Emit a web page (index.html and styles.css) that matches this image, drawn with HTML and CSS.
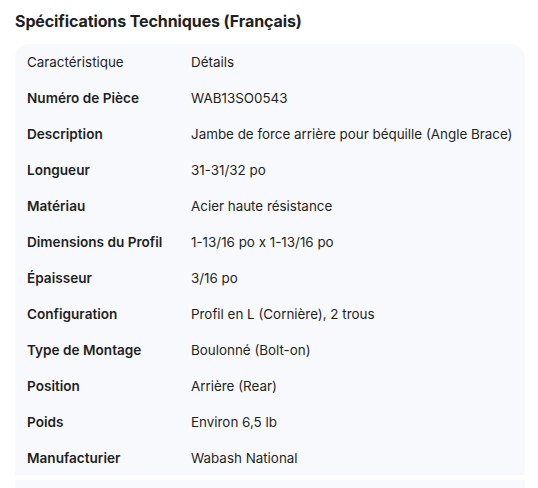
FILE: index.html
```html
<!DOCTYPE html>
<html lang="fr">
<head>
<meta charset="utf-8">
<link rel="stylesheet" href="styles.css">
</head>
<body>
<h2 class="title">Spécifications Techniques (Français)</h2>
<div class="card">
  <table class="specs">
    <thead>
      <tr><th>Caractéristique</th><th>Détails</th></tr>
    </thead>
    <tbody>
      <tr><td class="k">Numéro de Pièce</td><td>WAB13SO0543</td></tr>
      <tr><td class="k">Description</td><td>Jambe de force arrière pour béquille (Angle Brace)</td></tr>
      <tr><td class="k">Longueur</td><td>31-31/32 po</td></tr>
      <tr><td class="k">Matériau</td><td>Acier haute résistance</td></tr>
      <tr><td class="k">Dimensions du Profil</td><td>1-13/16 po x 1-13/16 po</td></tr>
      <tr><td class="k">Épaisseur</td><td>3/16 po</td></tr>
      <tr><td class="k">Configuration</td><td>Profil en L (Cornière), 2 trous</td></tr>
      <tr><td class="k">Type de Montage</td><td>Boulonné (Bolt-on)</td></tr>
      <tr><td class="k">Position</td><td>Arrière (Rear)</td></tr>
      <tr><td class="k">Poids</td><td>Environ 6,5 lb</td></tr>
      <tr><td class="k">Manufacturier</td><td>Wabash National</td></tr>
    </tbody>
  </table>
</div>
<div class="card2"></div>
</body>
</html>
```
FILE: styles.css
```css
html, body { margin: 0; padding: 0; background: #fff; }
body {
  font-family: Inter, Roboto, "Noto Sans", sans-serif;
  color: #1f1f1f;
  padding: 11px 13px 0 15px;
  overflow: hidden;
  height: 488px;
  box-sizing: border-box;
}
.title {
  font-size: 16px;
  font-weight: 700;
  margin: 0 0 13px 0;
  line-height: 20px;
  letter-spacing: -0.1px;
}
.card {
  background: #f8f9fc;
  border-radius: 14px 14px 0 0;
  height: 431px;
}
.specs {
  border-collapse: collapse;
  font-size: 13.4px;
}
.specs th, .specs td {
  text-align: left;
  padding: 0;
  height: 36px;
  vertical-align: middle;
  white-space: nowrap;
}
.specs th { font-weight: 400; }
.specs th:first-child, .specs td:first-child { padding-left: 12px; width: 164px; }
.specs .k { font-weight: 600; font-size: 13.6px; }
.card2 {
  margin-top: 5px;
  background: #f8f9fc;
  height: 20px;
}
```
